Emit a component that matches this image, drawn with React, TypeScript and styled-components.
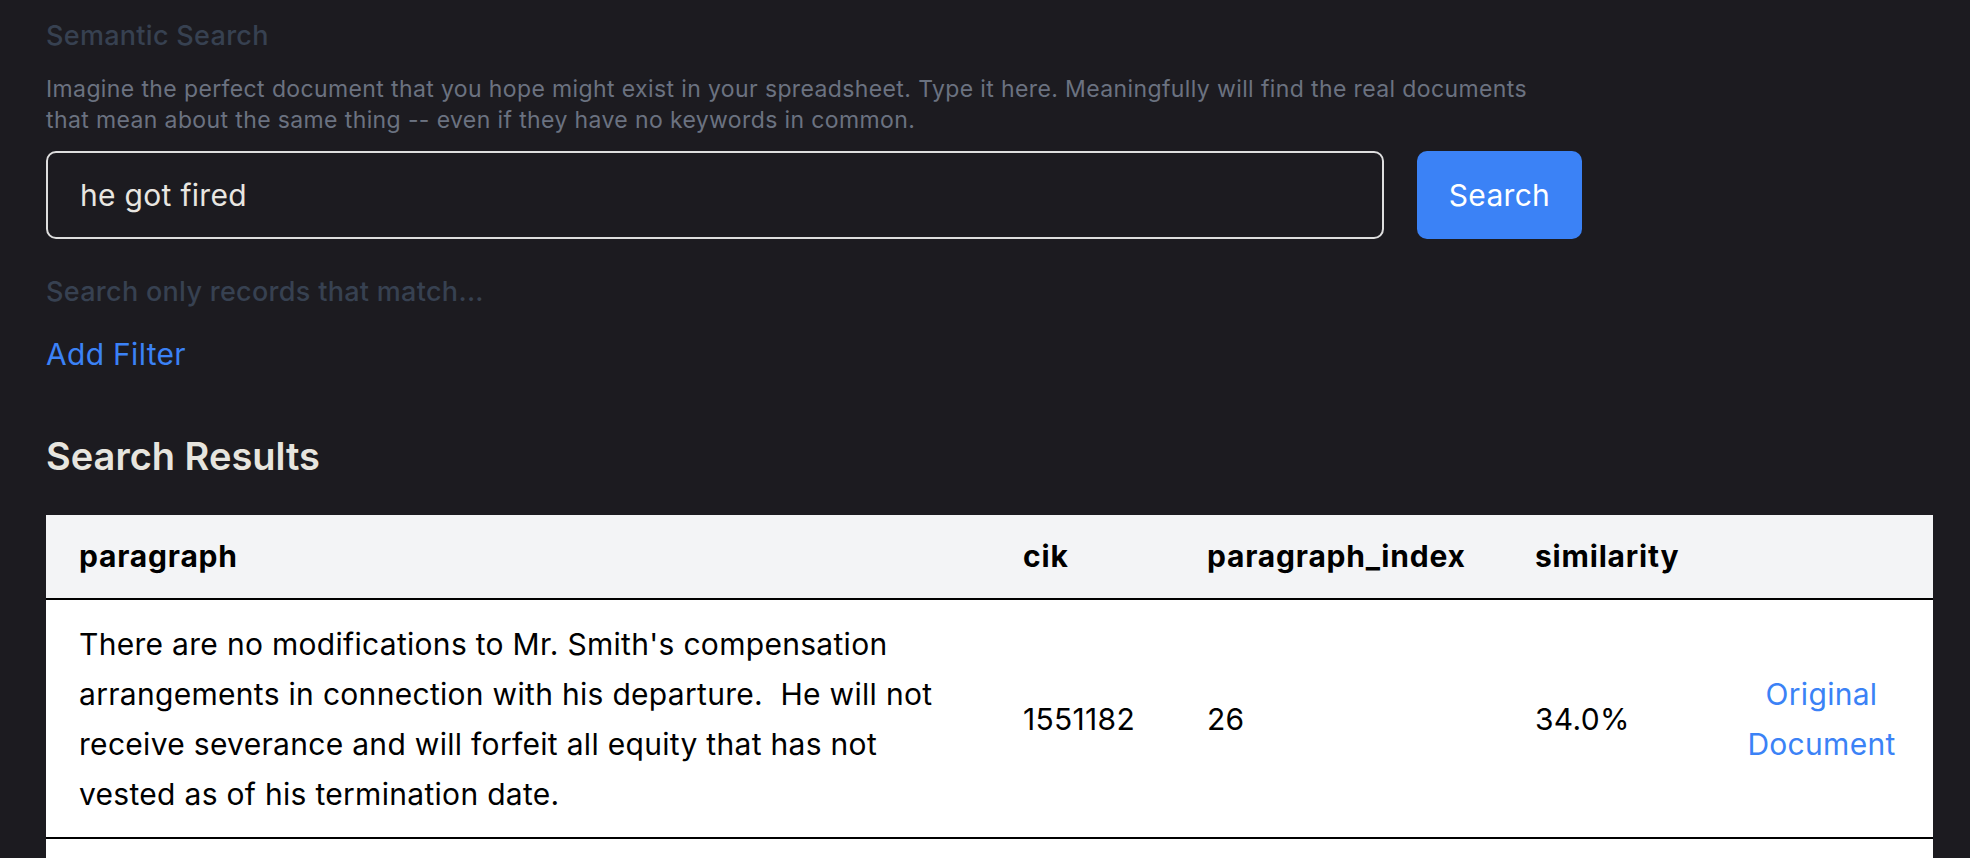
import React from "react";
import styled, { createGlobalStyle } from "styled-components";

const GlobalStyle = createGlobalStyle`
  html, body {
    margin: 0;
    padding: 0;
    background: #1c1b20;
  }
  body {
    font-family: Inter, "Noto Sans", "Liberation Sans", sans-serif;
    -webkit-font-smoothing: antialiased;
  }
  * { box-sizing: border-box; }
`;

const Page = styled.main`
  padding: 18px 37px 40px 46px;
`;

const Label = styled.div`
  font-size: 27px;
  line-height: 36px;
  font-weight: 500;
  letter-spacing: 0.3px;
  color: #374151;
`;

const Description = styled.p`
  margin: 20px 0 0;
  max-width: 1510px;
  font-size: 23px;
  line-height: 31px;
  letter-spacing: 0.38px;
  color: #6b7280;
`;

const SearchRow = styled.form`
  margin-top: 15px;
  display: flex;
  gap: 33px;
  max-width: 1536px;
`;

const QueryInput = styled.input`
  flex: 1;
  height: 88px;
  border: 2px solid #dedede;
  border-radius: 10px;
  background: transparent;
  padding: 0 32px;
  font-family: inherit;
  font-size: 30px;
  letter-spacing: 0.3px;
  color: #e8e6e1;
  outline: none;
`;

const SearchButton = styled.button`
  width: 165px;
  height: 88px;
  border: none;
  border-radius: 10px;
  background: #3b82f6;
  color: #ffffff;
  font-family: inherit;
  font-size: 30px;
  letter-spacing: 0.3px;
  cursor: pointer;
`;

const FilterLabel = styled(Label)`
  margin-top: 35px;
`;

const AddFilter = styled.a`
  display: block;
  margin-top: 24px;
  font-size: 30px;
  line-height: 40px;
  letter-spacing: 0.3px;
  color: #3b82f6;
  text-decoration: none;
  cursor: pointer;
`;

const ResultsTitle = styled.h2`
  margin: 60px 0 0;
  font-size: 38px;
  line-height: 44px;
  font-weight: 600;
  color: #e7e5df;
`;

const Table = styled.table`
  margin-top: 37px;
  width: 1887px;
  table-layout: fixed;
  border-collapse: collapse;
  background: #ffffff;
  font-size: 30px;
  line-height: 50px;
  letter-spacing: 0.3px;
  color: #000000;
`;

const HeadRow = styled.tr`
  background: #f3f4f6;
  border-bottom: 2px solid #000;
`;

const Th = styled.th`
  padding: 16px 33px 17px;
  text-align: left;
  font-weight: 700;
  letter-spacing: 0.8px;
`;

const Row = styled.tr`
  border-bottom: 2px solid #000;
`;

const Td = styled.td<{ $center?: boolean; $pre?: boolean }>`
  padding: 19px 33px 18px;
  vertical-align: middle;
  text-align: ${(p) => (p.$center ? "center" : "left")};
  white-space: ${(p) => (p.$pre ? "pre-wrap" : "normal")};
`;

const DocLink = styled.a`
  color: #3b82f6;
  text-decoration: none;
  cursor: pointer;
`;

type Result = {
  paragraph: string;
  cik: string;
  index: string;
  similarity: string;
};

const results: Result[] = [
  {
    paragraph:
      "There are no modifications to Mr. Smith's compensation arrangements in connection with his departure.  He will not receive severance and will forfeit all equity that has not vested as of his termination date.",
    cik: "1551182",
    index: "26",
    similarity: "34.0%",
  },
  {
    paragraph:
      "On March 3, the Board of Directors terminated the employment of the Company's Chief Operating Officer, effective immediately.",
    cik: "1437491",
    index: "12",
    similarity: "33.2%",
  },
];

export default function App() {
  return (
    <>
      <GlobalStyle />
      <Page>
        <Label>Semantic Search</Label>
        <Description>
          Imagine the perfect document that you hope might exist in your spreadsheet. Type it here.
          Meaningfully will find the real documents that mean about the same thing -- even if they
          have no keywords in common.
        </Description>
        <SearchRow onSubmit={(e) => e.preventDefault()}>
          <QueryInput defaultValue="he got fired" />
          <SearchButton type="submit">Search</SearchButton>
        </SearchRow>
        <FilterLabel>Search only records that match...</FilterLabel>
        <AddFilter>Add Filter</AddFilter>
        <ResultsTitle>Search Results</ResultsTitle>
        <Table>
          <colgroup>
            <col style={{ width: 944 }} />
            <col style={{ width: 184 }} />
            <col style={{ width: 328 }} />
            <col style={{ width: 208 }} />
            <col style={{ width: 223 }} />
          </colgroup>
          <thead>
            <HeadRow>
              <Th>paragraph</Th>
              <Th>cik</Th>
              <Th>paragraph_index</Th>
              <Th>similarity</Th>
              <Th />
            </HeadRow>
          </thead>
          <tbody>
            {results.map((r) => (
              <Row key={r.cik + r.index}>
                <Td $pre>{r.paragraph}</Td>
                <Td>{r.cik}</Td>
                <Td>{r.index}</Td>
                <Td>{r.similarity}</Td>
                <Td $center>
                  <DocLink>Original Document</DocLink>
                </Td>
              </Row>
            ))}
          </tbody>
        </Table>
      </Page>
    </>
  );
}
